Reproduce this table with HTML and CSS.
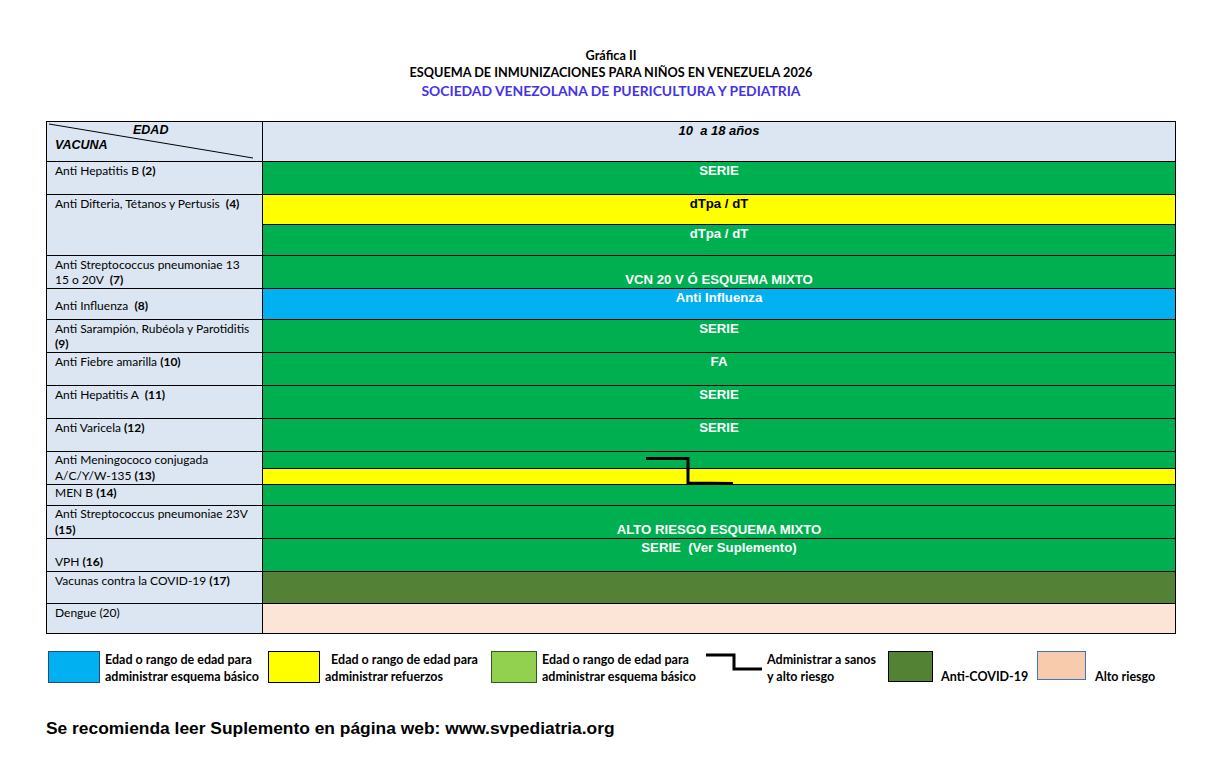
FILE: index.html
```html
<!DOCTYPE html>
<html lang="es">
<head>
<meta charset="utf-8">
<title>Esquema de inmunizaciones</title>
<link rel="stylesheet" href="styles.css">
</head>
<body>
<div class="page">
  <header class="titles">
    <div class="t1">Gráfica II</div>
    <div class="t2">ESQUEMA DE INMUNIZACIONES PARA NIÑOS EN VENEZUELA 2026</div>
    <div class="t3">SOCIEDAD VENEZOLANA DE PUERICULTURA Y PEDIATRIA</div>
  </header>

  <div class="table">
    <div class="row r-head">
      <div class="lab head-lab">
        <svg class="diag" viewBox="0 0 216 40" preserveAspectRatio="none"><line x1="2" y1="2" x2="206" y2="36" stroke="#000" stroke-width="1"/></svg>
        <span class="edad">EDAD</span>
        <span class="vacuna">VACUNA</span>
      </div>
      <div class="val head-val"><span>10&nbsp; a 18 años</span></div>
    </div>

    <div class="row h33">
      <div class="lab">Anti Hepatitis B <b>(2)</b></div>
      <div class="val green"><span>SERIE</span></div>
    </div>

    <div class="row h61">
      <div class="lab">Anti Difteria, Tétanos y Pertusis&nbsp; <b>(4)</b></div>
      <div class="val split">
        <div class="band yellow b30"><span class="dark">dTpa / dT</span></div>
        <div class="band green b31"><span>dTpa / dT</span></div>
      </div>
    </div>

    <div class="row h33">
      <div class="lab">Anti Streptococcus pneumoniae 13<br>15 o 20V&nbsp; <b>(7)</b></div>
      <div class="val green bottom"><span>VCN 20 V Ó ESQUEMA MIXTO</span></div>
    </div>

    <div class="row h31">
      <div class="lab middle"><span>Anti Influenza&nbsp; <b>(8)</b></span></div>
      <div class="val blue"><span>Anti Influenza</span></div>
    </div>

    <div class="row h33">
      <div class="lab">Anti Sarampión, Rubéola y Parotiditis<br><b>(9)</b></div>
      <div class="val green"><span>SERIE</span></div>
    </div>

    <div class="row h33">
      <div class="lab">Anti Fiebre amarilla <b>(10)</b></div>
      <div class="val green"><span>FA</span></div>
    </div>

    <div class="row h33">
      <div class="lab">Anti Hepatitis A&nbsp; <b>(11)</b></div>
      <div class="val green"><span>SERIE</span></div>
    </div>

    <div class="row h33">
      <div class="lab">Anti Varicela <b>(12)</b></div>
      <div class="val green"><span>SERIE</span></div>
    </div>

    <div class="row h33">
      <div class="lab tight">Anti Meningococo conjugada<br>A/C/Y/W-135 <b>(13)</b></div>
      <div class="val split">
        <div class="band green b17"></div>
        <div class="band yellow b16"></div>
        <svg class="step" viewBox="0 0 90 30"><polyline points="0,5.5 42,5.5 42,30 87,30.5" fill="none" stroke="#000" stroke-width="3"/></svg>
      </div>
    </div>

    <div class="row h21">
      <div class="lab tight">MEN B <b>(14)</b></div>
      <div class="val green"></div>
    </div>

    <div class="row h33">
      <div class="lab tight">Anti Streptococcus pneumoniae 23V<br><b>(15)</b></div>
      <div class="val green bottom"><span>ALTO RIESGO ESQUEMA MIXTO</span></div>
    </div>

    <div class="row h33">
      <div class="lab bottom"><span>VPH <b>(16)</b></span></div>
      <div class="val green"><span>SERIE&nbsp; (Ver Suplemento)</span></div>
    </div>

    <div class="row h32">
      <div class="lab">Vacunas contra la COVID-19 <b>(17)</b></div>
      <div class="val olive"></div>
    </div>

    <div class="row h30 last">
      <div class="lab">Dengue (20)</div>
      <div class="val peach"></div>
    </div>
  </div>

  <div class="legend">
    <div class="lg lg1">
      <div class="sw sw-blue"></div>
      <div class="lt">Edad o rango de edad para<br>administrar esquema básico</div>
    </div>
    <div class="lg lg2">
      <div class="sw sw-yellow"></div>
      <div class="lt">&nbsp;&nbsp;Edad o rango de edad para<br>administrar refuerzos</div>
    </div>
    <div class="lg lg3">
      <div class="sw sw-lgreen"></div>
      <div class="lt">Edad o rango de edad para<br>administrar esquema básico</div>
    </div>
    <div class="lg lg4">
      <svg class="lstep" viewBox="0 0 56 20"><polyline points="0,3 28,3 28,17 56,17" fill="none" stroke="#000" stroke-width="3"/></svg>
      <div class="lt">Administrar a sanos<br>y alto riesgo</div>
    </div>
    <div class="lg lg5">
      <div class="sw sw-olive"></div>
      <div class="lt low">Anti-COVID-19</div>
    </div>
    <div class="lg lg6">
      <div class="sw sw-peach"></div>
      <div class="lt low">Alto riesgo</div>
    </div>
  </div>

  <div class="footer">Se recomienda leer Suplemento en página web: www.svpediatria.org</div>
</div>
</body>
</html>
```
FILE: styles.css
```css
* { box-sizing: border-box; }
html, body { margin: 0; padding: 0; background: #fff; }
body { font-family: "Lato", "Noto Sans", sans-serif; color: #000; }

.page { width: 1219px; padding: 46px 0 0 46px; }

.titles { width: 1130px; text-align: center; font-weight: bold; }
.t1 { font-size: 12.7px; line-height: 18px; }
.t2 { font-size: 12.7px; line-height: 17px; }
.t3 { font-size: 13.9px; line-height: 20px; color: #4433e6; }

.table {
  margin-top: 20px;
  width: 1130px;
  border: 1.5px solid #000;
  display: flex;
  flex-direction: column;
}
.row { display: flex; border-bottom: 1px solid #000; }
.row.last { border-bottom: none; }
.r-head { height: 40px; }
.h33 { height: 33px; }
.h31 { height: 31px; }
.h32 { height: 32px; }
.h30 { height: 29px; }
.h21 { height: 21px; }
.h61 { height: 61px; }

.lab {
  width: 216px;
  flex: none;
  background: #dce6f2;
  border-right: 1px solid #000;
  font-size: 12px;
  line-height: 15px;
  padding: 1px 0 0 8px;
  white-space: nowrap;
}
.lab b { font-weight: bold; }
.lab.tight { padding-top: 0; line-height: 16px; }
.lab.middle { display: flex; align-items: center; padding-top: 2px; }
.lab.bottom { display: flex; align-items: flex-end; padding-bottom: 2px; }

.val {
  flex: 1;
  display: flex;
  justify-content: center;
  align-items: flex-start;
  padding-top: 1px;
  font-family: "Liberation Sans", Arial, sans-serif;
  font-weight: bold;
  font-size: 13.2px;
  line-height: 15px;
  color: #fff;
}
.val.bottom { align-items: flex-end; padding-bottom: 1px; }
.val span.dark { color: #000; }

.head-lab { position: relative; font-family: "Liberation Sans", Arial, sans-serif; font-style: italic; font-weight: bold; font-size: 12.5px; padding: 0; }
.diag { position: absolute; left: 0; top: 0; width: 216px; height: 40px; }
.edad { position: absolute; left: 86px; top: 1px; }
.vacuna { position: absolute; left: 8px; top: 16px; }
.head-val { background: #dce6f2; color: #000; font-style: italic; font-size: 13px; padding-top: 1px; }

.green { background: #00b050; }
.yellow { background: #ffff00; }
.blue { background: #00b0f0; }
.olive { background: #538135; }
.peach { background: #fce4d6; }

.split { flex-direction: column; align-items: stretch; padding: 0; position: relative; }
.band { display: flex; justify-content: center; align-items: flex-start; padding-top: 1px; }
.b30 { height: 30px; border-bottom: 1px solid #000; }
.b31 { flex: 1; }
.b17 { height: 17px; border-bottom: 1px solid #000; }
.b16 { flex: 1; }
.step { position: absolute; left: 383px; top: 0; width: 90px; height: 32px; overflow: visible; }

.legend { display: flex; margin-top: 17px; height: 36px; font-size: 12.5px; font-weight: bold; line-height: 17px; }
.lg { display: flex; flex: none; }
.sw { width: 52px; height: 32px; border: 1.5px solid #000; flex: none; }
.sw-blue { background: #00b0f0; border-color: #1f4e79; }
.sw-yellow { background: #ffff00; }
.sw-lgreen { background: #92d050; border-color: #375623; width: 46px; }
.sw-olive { background: #548235; width: 45px; height: 31px; }
.sw-peach { background: #f8cbad; border-color: #4472c4; width: 49px; height: 29px; }
.lt { margin-left: 5px; padding-top: 0; white-space: nowrap; }
.lt.low { padding-top: 17px; }

.lg1 { width: 220px; margin-left: 2px; }
.lg2 { width: 223px; }
.lg3 { width: 215px; }
.lg4 { width: 182px; }
.lg4 .lstep { width: 56px; height: 20px; margin-top: 1px; flex: none; }
.lg5 { width: 149px; }
.lg5 .lt { margin-left: 8px; }
.lg6 .lt { margin-left: 9px; }

.footer {
  margin-top: 31px;
  font-family: "Liberation Sans", Arial, sans-serif;
  font-weight: bold;
  font-size: 17.4px;
  line-height: 20px;
}
```
